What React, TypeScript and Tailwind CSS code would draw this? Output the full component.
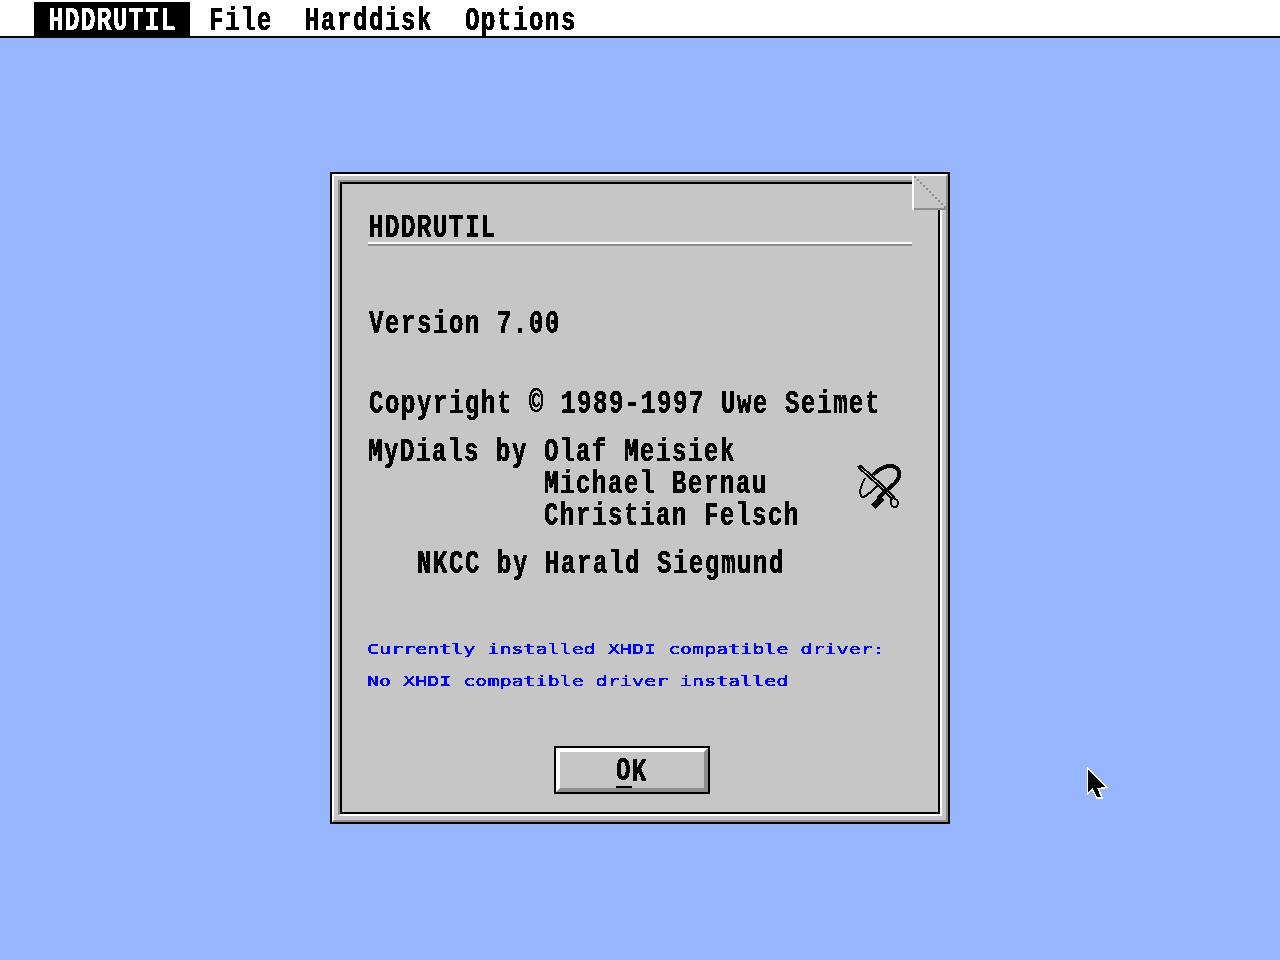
const big = 'inline-block whitespace-pre font-bold text-[24px] leading-[22px] tracking-[1.6px] scale-y-[1.42] origin-center [filter:url(#crisp)]';
const small = 'inline-block whitespace-pre text-[20px] leading-[22px] scale-y-[0.7] origin-center text-[#0000ff] [filter:url(#crisp)]';
const row = 'flex h-8 items-center pl-px pt-1';
const mono = { fontFamily: '"Liberation Mono", monospace' };
const smallFont = { fontFamily: '"DejaVu Sans Mono", monospace' };

function MenuItem({ label, className }: { label: string; className?: string }) {
  return (
    <div className={`flex h-[34px] items-center pt-1 ${className}`}>
      <span className={big}>{label}</span>
    </div>
  );
}

function Dish() {
  return (
    <svg width="70" height="65" viewBox="0 0 70 65" className="mt-[21px] shrink-0" fill="none" stroke="#000" shapeRendering="crispEdges">
      <path d="M14 13 L34 31 L47 44" strokeWidth="2" />
      <path d="M17 12 L36 29 L50 43" strokeWidth="2" />
      <path d="M13 13 L17 11" strokeWidth="4" />
      <path d="M20 23 C15 31 14 39 17 42 C20 43 26 37 33 30" strokeWidth="2" />
      <path d="M28 20 C34 13 44 9 50 12 C56 15 56 21 50 28 C45 33 38 37 33 44" strokeWidth="4" />
      <path d="M37 43 L28 52" strokeWidth="7" />
      <path d="M46 44 C50 42 55 46 52 51 C49 54 44 50 46 44 Z" strokeWidth="2" />
    </svg>
  );
}

function Fold() {
  return (
    <svg width="34" height="34" viewBox="0 0 34 34" className="absolute left-[578px] top-0">
      <rect x="0" y="0" width="34" height="34" fill="#c6c6c6" />
      <rect x="0" y="0" width="2" height="34" fill="#fff" />
      <rect x="2" y="32" width="32" height="2" fill="#8e8e8e" />
      {[...Array(11).keys()].map((i) => (
        <rect key={i} x={2 + i * 3} y={i * 3} width="2" height="2" fill="#8e8e8e" />
      ))}
    </svg>
  );
}

function Cursor() {
  return (
    <svg width="40" height="45" viewBox="0 0 40 45" className="absolute left-[1075px] top-[760px]">
      <path
        d="M13 10 L13 32 L17.5 27.5 L22 37 L26 37 L22 28 L30 27 Z"
        fill="#000"
        stroke="#fff"
        strokeWidth="3"
        paintOrder="stroke"
        shapeRendering="crispEdges"
      />
    </svg>
  );
}

export default function App() {
  return (
    <div className="relative h-[960px] w-[1280px] overflow-hidden bg-[#97b6ff] text-black" style={mono}>
      {/* 1-bit look for the text, the original screen has no antialiasing */}
      <svg width="0" height="0" className="absolute">
        <filter id="crisp" colorInterpolationFilters="sRGB" x="0" y="0" width="100%" height="100%">
          <feComponentTransfer>
            <feFuncA type="discrete" tableValues="0 1 1 1 1 1" />
          </feComponentTransfer>
        </filter>
      </svg>

      <div className="flex h-[38px] items-end border-b-2 border-black bg-white pl-[34px]">
        <MenuItem label="HDDRUTIL" className="bg-black pl-[15px] pr-[13px] text-white" />
        <MenuItem label="File" className="ml-[19px]" />
        <MenuItem label="Harddisk" className="ml-8" />
        <MenuItem label="Options" className="ml-8" />
      </div>

      <div className="ml-[330px] mt-[134px] h-[652px] w-[620px] border-2 border-black">
        <div className="relative h-full border-2 border-b-[#8e8e8e] border-l-white border-r-[#8e8e8e] border-t-white bg-[#c6c6c6] p-1">
          <div className="h-full border-2 border-b-white border-l-[#8e8e8e] border-r-white border-t-[#8e8e8e]">
            <div className="h-full border-2 border-black pt-[26px]">
              <div className="px-[26px]">
                <div className={row}><span className={big}>HDDRUTIL</span></div>
                <div className="border-b-2 border-t-2 border-b-[#8e8e8e] border-t-white" />
              </div>

              <div className="mt-[60px] pl-[26px]">
                <div className={row}><span className={big}>Version 7.00</span></div>
              </div>
              <div className="mt-12 pl-[26px]">
                <div className={row}><span className={big}>Copyright © 1989-1997 Uwe Seimet</span></div>
              </div>

              <div className="mt-4 flex items-start pl-[25px] pr-[23px]">
                <div className="flex-1">
                  <div className={row}><span className={big}>MyDials by Olaf Meisiek</span></div>
                  <div className={`${row} ml-[176px]`}><span className={big}>Michael Bernau</span></div>
                  <div className={`${row} ml-[176px]`}><span className={big}>Christian Felsch</span></div>
                </div>
                <Dish />
              </div>

              <div className="mt-4 pl-[74px]">
                <div className={row}><span className={big}>NKCC by Harald Siegmund</span></div>
              </div>

              <div className="mt-[53px] pl-6" style={smallFont}>
                <div className={row}><span className={small}>Currently installed XHDI compatible driver:</span></div>
                <div className={row}><span className={small}>No XHDI compatible driver installed</span></div>
              </div>

              <div className="ml-[212px] mt-[51px] flex h-12 w-[156px] border-2 border-black">
                <div className="flex flex-1 items-center justify-center border-4 border-b-[#8e8e8e] border-l-white border-r-[#8e8e8e] border-t-white pt-1">
                  <span className="relative">
                    <span className={big}>O</span>
                    <span className="absolute left-0 top-[26px] h-0.5 w-4 bg-black" />
                  </span>
                  <span className={big}>K</span>
                </div>
              </div>
            </div>
          </div>
          <Fold />
        </div>
      </div>

      <Cursor />
    </div>
  );
}
